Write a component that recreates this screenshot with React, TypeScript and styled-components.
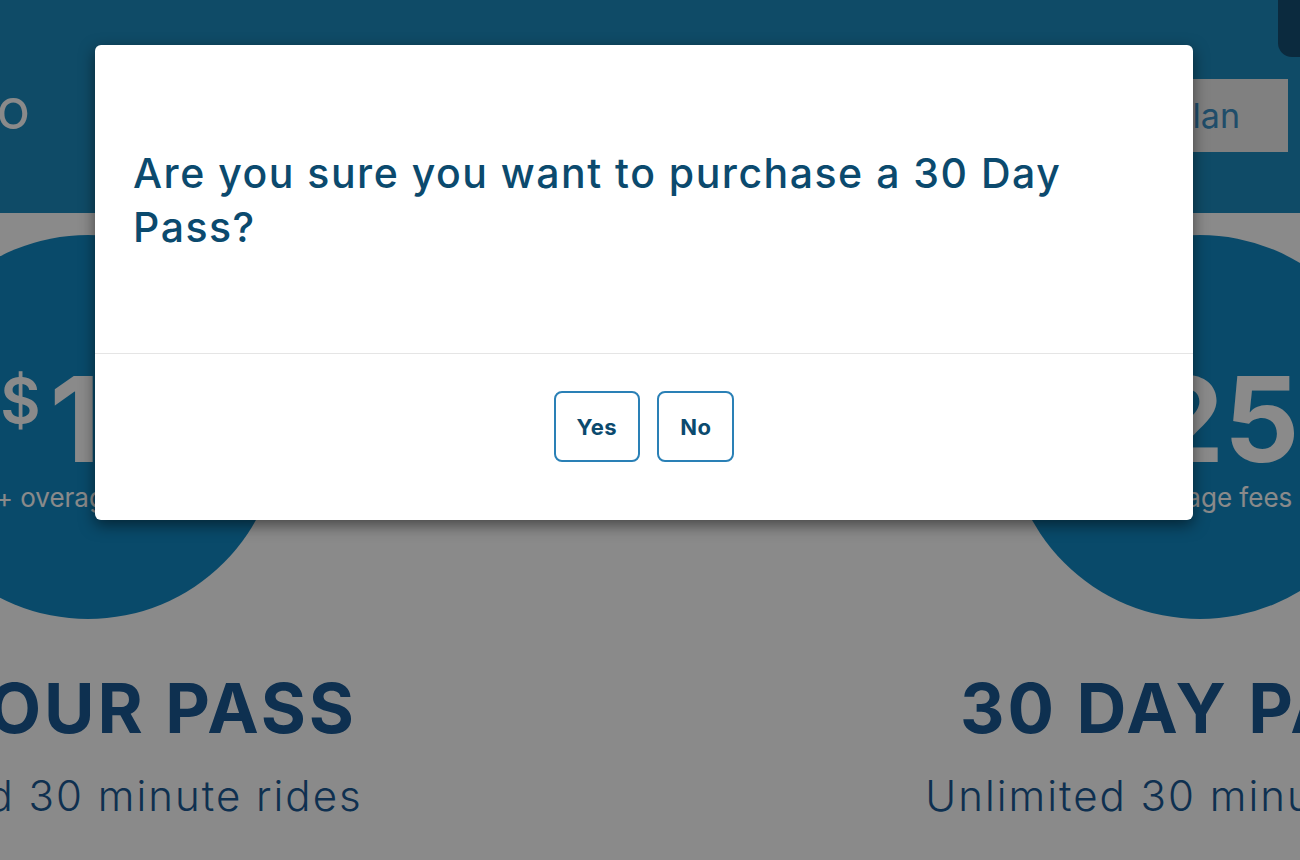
import { type FC } from 'react'
import styled, { createGlobalStyle } from 'styled-components'

const GlobalStyle = createGlobalStyle`
  html, body {
    margin: 0;
    padding: 0;
    background: #ffffff;
    font-family: Inter, 'Noto Sans', sans-serif;
    overflow: hidden;
  }
`

const Page = styled.div`
  position: relative;
  width: 1300px;
  height: 860px;
  overflow: hidden;
  background: #ffffff;
`

const Band = styled.header`
  background: #1c8bbf;
  display: flex;
  height: 213px;
  justify-content: center;
`

const BandInner = styled.div`
  align-items: center;
  box-sizing: border-box;
  display: flex;
  flex: 0 0 1724px;
  justify-content: space-between;
  padding: 0 224px 0 107px;
`

const Greeting = styled.span`
  color: #ffffff;
  font-size: 56px;
  font-weight: 400;
  line-height: 1;
  margin-top: 4px;
`

const PlanButton = styled.button`
  background: #ececec;
  border: 0;
  color: #3a8fc4;
  font-family: inherit;
  font-size: 34px;
  height: 73px;
  margin-top: 18px;
  padding: 0 48px;
`

const MenuTab = styled.div`
  background: #164e73;
  border-bottom-left-radius: 14px;
  height: 57px;
  position: absolute;
  right: -40px;
  top: 0;
  width: 62px;
`

const Plans = styled.section`
  display: flex;
  gap: 512px;
  justify-content: center;
  padding: 22px 12px 0 0;
`

const Plan = styled.div`
  align-items: center;
  display: flex;
  flex: 0 0 600px;
  flex-direction: column;
`

const Circle = styled.div`
  align-items: center;
  background: #1289c4;
  border-radius: 50%;
  display: flex;
  flex-direction: column;
  height: 384px;
  justify-content: center;
  width: 384px;
`

const Price = styled.div`
  color: #ffffff;
  display: flex;
  font-size: 118px;
  font-weight: 700;
  line-height: 1;
  margin-top: 18px;
`

const Currency = styled.span`
  font-size: 62px;
  font-weight: 600;
  margin: 10px 9px 0 0;
`

const Fees = styled.div`
  color: #ffffff;
  font-size: 26px;
  font-weight: 400;
  margin-top: 4px;
`

const PlanTitle = styled.h2`
  color: #1a5994;
  font-size: 69px;
  font-weight: 700;
  letter-spacing: 3px;
  line-height: 1;
  margin: 55px 0 0;
  white-space: nowrap;
`

const PlanText = styled.p`
  color: #1a5994;
  font-size: 42px;
  font-weight: 300;
  letter-spacing: 2px;
  margin: 27px 0 0;
  white-space: nowrap;
`

const Backdrop = styled.div`
  background: rgba(0, 0, 0, 0.46);
  inset: 0;
  position: absolute;
`

const Dialog = styled.div`
  background: #ffffff;
  border-radius: 6px;
  box-shadow: 0 5px 15px rgba(0, 0, 0, 0.5);
  margin: 45px 0 0 95px;
  width: 1098px;
`

const Body = styled.div`
  border-bottom: 1px solid #e5e5e5;
  padding: 101px 38px 99px;
`

const Question = styled.h3`
  color: #0b4a6e;
  font-size: 41px;
  font-weight: 500;
  letter-spacing: 1.5px;
  line-height: 54px;
  margin: 0;
`

const Footer = styled.div`
  display: flex;
  gap: 17px;
  justify-content: center;
  padding: 37px 0 58px;
`

const Choice = styled.button`
  background: #ffffff;
  border: 2px solid #2a80b6;
  border-radius: 8px;
  color: #0b4a6e;
  font-family: inherit;
  font-size: 22px;
  font-weight: 700;
  height: 71px;
  letter-spacing: 0.5px;
  padding: 0 21px;
`

const plans = [
  { price: '15', title: '24 HOUR PASS' },
  { price: '25', title: '30 DAY PASS' },
]

const App: FC = () => (
  <Page>
    <GlobalStyle />
    <Band>
      <BandInner>
        <Greeting>Hello</Greeting>
        <PlanButton>Change Plan</PlanButton>
      </BandInner>
    </Band>
    <MenuTab />
    <Plans>
      {plans.map((plan) => (
        <Plan key={plan.title}>
          <Circle>
            <Price>
              <Currency>$</Currency>
              {plan.price}
            </Price>
            <Fees>+ overage fees</Fees>
          </Circle>
          <PlanTitle>{plan.title}</PlanTitle>
          <PlanText>Unlimited 30 minute rides</PlanText>
        </Plan>
      ))}
    </Plans>
    <Backdrop>
      <Dialog>
        <Body>
          <Question>Are you sure you want to purchase a 30 Day Pass?</Question>
        </Body>
        <Footer>
          <Choice>Yes</Choice>
          <Choice>No</Choice>
        </Footer>
      </Dialog>
    </Backdrop>
  </Page>
)

export default App
